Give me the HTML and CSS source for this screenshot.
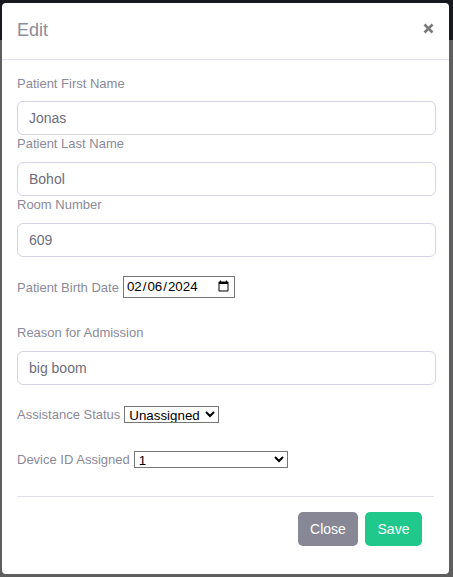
FILE: index.html
```html
<!DOCTYPE html>
<html>
<head>
<meta charset="utf-8">
<link rel="stylesheet" href="styles.css">
</head>
<body>
<div class="backdrop">
  <div class="modal">
    <div class="modal-header">
      <h5 class="modal-title">Edit</h5>
      <button class="btn-x" type="button" aria-label="Close">
        <svg width="11" height="11" viewBox="0 0 11 11"><path d="M1.5 1.5 L9.5 9.5 M9.5 1.5 L1.5 9.5" stroke="#7a7a7a" stroke-width="2.6" stroke-linecap="butt"/></svg>
      </button>
    </div>
    <div class="modal-body">
      <label class="lbl lbl-first">Patient First Name</label>
      <input class="field" type="text" value="Jonas">
      <label class="lbl">Patient Last Name</label>
      <input class="field" type="text" value="Bohol">
      <label class="lbl">Room Number</label>
      <input class="field" type="text" value="609">
      <div class="row row-date">
        <label class="lbl-inline">Patient Birth Date</label>
        <input class="date" type="date" value="2024-02-06">
      </div>
      <label class="lbl">Reason for Admission</label>
      <input class="field" type="text" value="big boom">
      <div class="row row-status">
        <label class="lbl-inline">Assistance Status</label>
        <select class="sel sel-status"><option>Unassigned</option></select>
      </div>
      <div class="row row-device">
        <label class="lbl-inline">Device ID Assigned</label>
        <select class="sel sel-device"><option>1</option></select>
      </div>
    </div>
    <div class="modal-footer">
      <button class="btn btn-close" type="button">Close</button>
      <button class="btn btn-save" type="button">Save</button>
    </div>
  </div>
</div>
</body>
</html>
```
FILE: styles.css
```css
html, body {
  margin: 0;
  padding: 0;
}
body {
  width: 453px;
  height: 577px;
  overflow: hidden;
  background: linear-gradient(to bottom, #17191e 0, #17191e 40px, #5e5e5e 40px, #5e5e5e 100%);
  font-family: "Liberation Sans", Arial, sans-serif;
}
.backdrop {
  padding: 3px 4px 3px 2px;
}
.modal {
  background: #fff;
  width: 447px;
  height: 571px;
  border-radius: 4px;
  display: flex;
  flex-direction: column;
  box-sizing: border-box;
}
.modal-header {
  height: 57px;
  box-sizing: border-box;
  border-bottom: 1px solid #e3e2ec;
  display: flex;
  align-items: center;
  justify-content: space-between;
  padding: 0 15px 2px 15px;
}
.modal-title {
  margin: 0;
  font-size: 18px;
  font-weight: normal;
  color: #8c8c9c;
}
.btn-x {
  border: 0;
  background: none;
  padding: 0;
  margin: -3px 0 0 0;
  width: 11px;
  height: 11px;
  display: flex;
}
.modal-body {
  padding: 14px 15px 0 15px;
  display: flex;
  flex-direction: column;
  align-items: flex-start;
}
.lbl {
  font-size: 13px;
  line-height: 18px;
  color: #8a8a99;
  margin-bottom: 9px;
  padding-top: 1px;
  margin-top: -1px;
}
.lbl-first {
  padding-top: 1px;
  margin-top: 0;
  margin-bottom: 8px;
}
.field {
  width: 419px;
  height: 34px;
  box-sizing: border-box;
  border: 1px solid #d6d3e6;
  border-radius: 6px;
  padding: 0 11px;
  font-family: "Liberation Sans", Arial, sans-serif;
  font-size: 14px;
  color: #6d6d7d;
  margin: 0;
  outline: none;
}
.row {
  display: flex;
  align-items: center;
}
.lbl-inline {
  font-size: 13px;
  color: #8a8a99;
  margin-right: 4px;
}
.row-date {
  margin-top: 19px;
  margin-bottom: 26px;
}
.date {
  width: 112px;
  height: 22px;
  box-sizing: border-box;
  font-family: "Liberation Sans", Arial, sans-serif;
  font-size: 13.33px;
  border: 1px solid #767676;
  border-radius: 0;
  padding: 0 2px;
  margin: 0;
  color: #000;
  background: #fff;
}
.sel {
  height: 17px;
  box-sizing: border-box;
  font-family: "Liberation Sans", Arial, sans-serif;
  font-size: 13.33px;
  border: 1px solid #767676;
  border-radius: 0;
  margin: 0;
  padding: 0;
  color: #000;
  background: #fff;
}
.row-status {
  margin-top: 21px;
}
.sel-status {
  width: 95px;
}
.row-device {
  margin-top: 28px;
}
.sel-device {
  width: 154px;
}
.modal-footer {
  margin: 28px 15px 0 15px;
  border-top: 1px solid #e3e2ec;
  padding: 15px 12px 0 0;
  display: flex;
  justify-content: flex-end;
  gap: 7px;
}
.btn {
  height: 34px;
  border: 0;
  border-radius: 5px;
  color: #fff;
  font-family: "Liberation Sans", Arial, sans-serif;
  font-size: 14px;
  padding: 0 12px;
}
.btn-close {
  background: #878795;
  width: 60px;
}
.btn-save {
  background: #20c98b;
  width: 57px;
}
```
